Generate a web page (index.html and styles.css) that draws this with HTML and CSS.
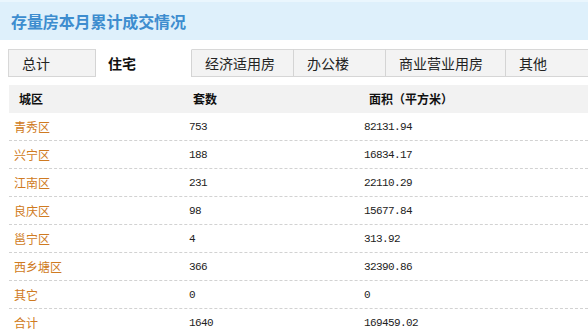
FILE: index.html
```html
<!DOCTYPE html>
<html lang="zh-CN">
<head>
<meta charset="utf-8">
<title>存量房本月累计成交情况</title>
<link rel="stylesheet" href="styles.css">
</head>
<body>
<div class="panel">
  <div class="title-bar"><h1 class="title">存量房本月累计成交情况</h1></div>
  <div class="tabs">
    <div class="tab">总计</div>
    <div class="tab active">住宅</div>
    <div class="tab">经济适用房</div>
    <div class="tab">办公楼</div>
    <div class="tab">商业营业用房</div>
    <div class="tab">其他</div>
  </div>
  <div class="table">
    <div class="row head">
      <div class="cell">城区</div>
      <div class="cell">套数</div>
      <div class="cell">面积（平方米）</div>
    </div>
    <div class="row"><div class="cell name">青秀区</div><div class="cell num">753</div><div class="cell num">82131.94</div></div>
    <div class="row"><div class="cell name">兴宁区</div><div class="cell num">188</div><div class="cell num">16834.17</div></div>
    <div class="row"><div class="cell name">江南区</div><div class="cell num">231</div><div class="cell num">22110.29</div></div>
    <div class="row"><div class="cell name">良庆区</div><div class="cell num">98</div><div class="cell num">15677.84</div></div>
    <div class="row"><div class="cell name">邕宁区</div><div class="cell num">4</div><div class="cell num">313.92</div></div>
    <div class="row"><div class="cell name">西乡塘区</div><div class="cell num">366</div><div class="cell num">32390.86</div></div>
    <div class="row"><div class="cell name">其它</div><div class="cell num">0</div><div class="cell num">0</div></div>
    <div class="row last"><div class="cell name">合计</div><div class="cell num">1640</div><div class="cell num">169459.02</div></div>
  </div>
</div>
</body>
</html>
```

FILE: styles.css
```css
html, body {
  margin: 0;
  padding: 0;
  background: #ffffff;
}
body {
  font-family: "Noto Sans CJK SC", "Noto Sans", sans-serif;
  color: #222;
  width: 588px;
  overflow: hidden;
}
.title-bar {
  height: 40px;
  background: #def0fb;
  border-top: 2px solid #eaf6fd;
  box-sizing: border-box;
  display: flex;
  align-items: center;
  padding-left: 11px;
}
.title {
  margin: 0;
  font-size: 16px;
  line-height: 20px;
  font-weight: 700;
  color: #3d8dcf;
  letter-spacing: -0.1px;
}
.tabs {
  margin: 9px 0 0 8px;
  display: grid;
  grid-template-columns: 88px 96px 102px 92px 120px 1fr;
  height: 28px;
  box-sizing: border-box;
  border-bottom: 1px solid #d6d6d6;
}
.tab {
  box-sizing: border-box;
  height: 27px;
  background: #f3f3f3;
  border-top: 1px solid #d8d8d8;
  border-right: 1px solid #d4d4d4;
  font-size: 14px;
  line-height: 26px;
  padding-left: 13px;
  color: #222;
}
.tab:first-child {
  border-left: 1px solid #d8d8d8;
}
.tab.active {
  background: #ffffff;
  border-top-color: #ffffff;
  height: 28px;
  margin-bottom: -1px;
  font-weight: 700;
  color: #111;
  padding-left: 12px;
}
.tabs .tab:last-child {
  border-right: none;
}
.table {
  margin: 8px 0 0 9px;
}
.row {
  display: grid;
  grid-template-columns: 175px 175px 1fr;
  height: 28px;
  box-sizing: border-box;
  border-bottom: 1px dashed #d2d2d2;
  align-items: center;
}
.row.head {
  background: #f2f2f2;
  border-bottom: none;
  font-weight: 700;
  font-size: 12px;
  color: #111;
}
.row.last {
  border-bottom: none;
}
.head .cell:first-child { padding-left: 10px; }
.head .cell:nth-child(2) { padding-left: 9px; }
.head .cell:nth-child(3) { padding-left: 10px; }
.cell {
  padding-left: 5px;
  line-height: 16px;
  white-space: nowrap;
}
.name {
  font-size: 12px;
  color: #cf7a21;
}
.num {
  font-family: "Liberation Mono", "DejaVu Sans Mono", monospace;
  font-size: 11px;
  letter-spacing: -0.6px;
  color: #222;
}
```
